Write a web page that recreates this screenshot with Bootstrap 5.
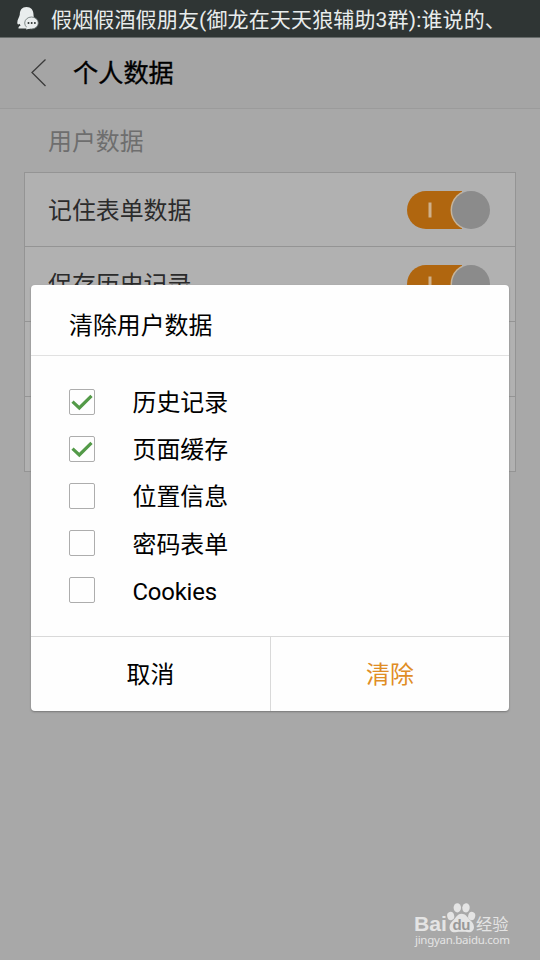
<!DOCTYPE html>
<html lang="zh-CN">
<head>
<meta charset="utf-8">
<meta name="viewport" content="width=device-width, initial-scale=1">
<title>个人数据</title>
<link href="https://cdn.jsdelivr.net/npm/bootstrap@5.3.0/dist/css/bootstrap.min.css" rel="stylesheet">
<style>
  body { font-family: Roboto, "Noto Sans CJK SC", sans-serif; font-size: 23.900px; line-height: 36px; color: #000; background: #a7a7a7; }
  .screen { height: 960px; width: 540px; background: #a8a8a8; }
  .statusbar { height: 38px; background: #2f3534; color: #e8ecec; font-size: 21px; line-height: 36px; letter-spacing: .15px; padding-left: 17px; border-bottom: 1px solid #666b6a; }
  .statusbar span { padding-top: 2px; }
  .statusbar svg { margin-right: 12px; }
  .topbar { height: 71px; background: #a5a5a5; border-bottom: 1px solid #9b9b9b; padding-left: 30px; }
  .topbar h1 { font-size: 25.200px; font-weight: 400; -webkit-text-stroke: .35px #000; line-height: 36px; margin-left: 26px; padding-top: 1px; }
  .section-label { height: 63px; padding: 15px 0 0 48px; color: #6e6e6e; }
  .settings { width: 492px; margin-left: 24px; }
  .settings .list-group-item { height: 75px; background: #b1b1b1; border-color: #949494; color: #2b2b2b; padding: 0 25px 0 23px; }
  .settings span { padding-top: 2px; }
  .dialog { left: 31px; top: 285px; width: 478px; height: 426px; border: 0; border-radius: 4px; box-shadow: 0 1px 2px #777; color: #000; background: #fefefe; }
  .dialog .modal-header { height: 71px; padding: 11px 38px 0; border-bottom: 1px solid #e1e1e1; align-items: center; }
  .dialog .modal-title { font-size: 23.900px; font-weight: 400; line-height: 36px; }
  .dialog .modal-body { padding: 22px 38px 0; }
  .choice { height: 47.200px; gap: 37.500px; }
  .choice span:last-child { padding-top: 3px; }
  .choice .latin { letter-spacing: -.2px; }
  .tickbox { width: 26px; height: 26px; border: 1px solid #adadad; border-radius: 2px; margin: 0; }
  .dialog .modal-footer { height: 75px; border-top: 1px solid #d9d9d9; padding: 0; }
  .dialog .btn { font-size: 23.900px; line-height: 36px; margin: 0; color: #000; border: 0; border-radius: 0; padding: 2px 0 0; }
  .dialog .btn-cancel { flex: 0 0 240px; border-right: 1px solid #d9d9d9; }
  .dialog .btn-clear { flex: 1 1 0; color: #e08d25; }
  .watermark { left: 414px; top: 901px; }
</style>
</head>
<body>
<div class="screen position-relative overflow-hidden">
  <div class="statusbar d-flex align-items-center text-nowrap">
    <svg width="22" height="23" viewBox="0 0 22 23" aria-hidden="true">
      <path fill="#e9eded" d="M9.500 0C5 0 2.800 3 2.800 7.500C2.600 10 .3 12 .3 15.500c0 2 1 2.600 2.200 1.200L3.600 18.500C2.200 19 1.200 20 1.500 21.500H10L18 13c-.6-2-1.500-3-1.500-5.500C16.500 3 14 0 9.500 0z"/>
      <ellipse cx="14.500" cy="16" rx="6.800" ry="6" fill="#e9eded" stroke="#66706e" stroke-width=".8"/>
      <path fill="#e9eded" d="M10 19l-1 3.500 5-1z"/>
      <g fill="#2f3534"><circle cx="11.500" cy="16" r="1"/><circle cx="14.700" cy="16" r="1"/><circle cx="17.900" cy="16" r="1"/></g>
    </svg>
    <span>假烟假酒假朋友(御龙在天天狼辅助3群):谁说的、</span>
  </div>
  <header class="topbar d-flex align-items-center">
    <svg width="17" height="30" viewBox="0 0 17 30" fill="none" stroke="#3b3b3b" stroke-width="1.300" aria-hidden="true"><path d="M15.500 1.500L2 14.500L15.500 28"/></svg>
    <h1 class="mb-0">个人数据</h1>
  </header>
  <div class="section-label">用户数据</div>
  <ul class="settings list-group rounded-0">
    <li class="list-group-item d-flex align-items-center justify-content-between">
      <span>记住表单数据</span>
      <svg width="84" height="40" viewBox="0 0 84 40" aria-hidden="true"><path fill="#b0660f" d="M20 1H56V39H20A19 19 0 0 1 20 1z"/><circle cx="65" cy="20" r="20.500" fill="#c5b49c"/><path fill="#b1b1b1" d="M56 0H84V40H56z"/><circle cx="65" cy="20" r="19" fill="#8b8b8b"/><path fill="#cfb18c" d="M22.500 12.500h3v15h-3z"/></svg>
    </li>
    <li class="list-group-item d-flex align-items-center justify-content-between">
      <span>保存历史记录</span>
      <svg width="84" height="40" viewBox="0 0 84 40" aria-hidden="true"><path fill="#b0660f" d="M20 1H56V39H20A19 19 0 0 1 20 1z"/><circle cx="65" cy="20" r="20.500" fill="#c5b49c"/><path fill="#b1b1b1" d="M56 0H84V40H56z"/><circle cx="65" cy="20" r="19" fill="#8b8b8b"/><path fill="#cfb18c" d="M22.500 12.500h3v15h-3z"/></svg>
    </li>
    <li class="list-group-item"></li>
    <li class="list-group-item"></li>
  </ul>

  <div class="dialog modal-content position-absolute" role="dialog" aria-labelledby="dialogTitle">
    <div class="modal-header justify-content-start"><h2 class="modal-title" id="dialogTitle">清除用户数据</h2></div>
    <div class="modal-body">
      <div class="choice d-flex align-items-center"><svg class="tickbox" viewBox="0 0 24 24" fill="none" stroke="#539a48" stroke-width="3.200"><path d="M2.500 11.700L9.300 18L21.500 5.800"/></svg><span>历史记录</span></div>
      <div class="choice d-flex align-items-center"><svg class="tickbox" viewBox="0 0 24 24" fill="none" stroke="#539a48" stroke-width="3.200"><path d="M2.500 11.700L9.300 18L21.500 5.800"/></svg><span>页面缓存</span></div>
      <div class="choice d-flex align-items-center"><span class="tickbox"></span><span>位置信息</span></div>
      <div class="choice d-flex align-items-center"><span class="tickbox"></span><span>密码表单</span></div>
      <div class="choice d-flex align-items-center"><span class="tickbox"></span><span class="latin">Cookies</span></div>
    </div>
    <div class="modal-footer d-flex flex-nowrap align-items-stretch">
      <button type="button" class="btn btn-cancel">取消</button>
      <button type="button" class="btn btn-clear">清除</button>
    </div>
  </div>

  <svg class="watermark position-absolute" width="98" height="48" viewBox="0 0 98 48" fill="#e4e4e4" role="img" aria-label="Baidu 经验">
    <text x="0" y="30" font-family="Liberation Sans, sans-serif" font-weight="700" font-size="20.500" textLength="33" lengthAdjust="spacingAndGlyphs">Bai</text>
    <ellipse cx="36.700" cy="15" rx="3.500" ry="4.200" transform="rotate(-15 36.700 15)"/>
    <ellipse cx="43.300" cy="6.800" rx="3.700" ry="4.600"/>
    <ellipse cx="52" cy="6.800" rx="3.700" ry="4.600" transform="rotate(8 52 6.800)"/>
    <ellipse cx="57.700" cy="15" rx="3.500" ry="4.200" transform="rotate(15 57.700 15)"/>
    <path d="M47.500 12.800c4 0 5.500 3 7.800 5.500c2.500 2.500 4.700 4.500 4.700 7.900c0 3-2.500 5.300-5.500 5c-4-.6-9-.6-13 0c-4 .4-6-2-6-5c0-3 2.200-5.400 4.500-7.700C42.500 16 43.500 12.800 47.500 12.800z"/>
    <text x="38.500" y="29" fill="#989898" font-family="Liberation Sans, sans-serif" font-weight="700" font-size="15" textLength="18">du</text>
    <text x="62" y="29" font-family="Noto Sans CJK SC, sans-serif" font-weight="400" font-size="16.200">经验</text>
    <text x="1" y="42.800" font-family="Noto Sans, sans-serif" font-size="11.500" textLength="95">jingyan.baidu.com</text>
  </svg>
</div>
<script src="https://cdn.jsdelivr.net/npm/bootstrap@5.3.0/dist/js/bootstrap.bundle.min.js"></script>
</body>
</html>
